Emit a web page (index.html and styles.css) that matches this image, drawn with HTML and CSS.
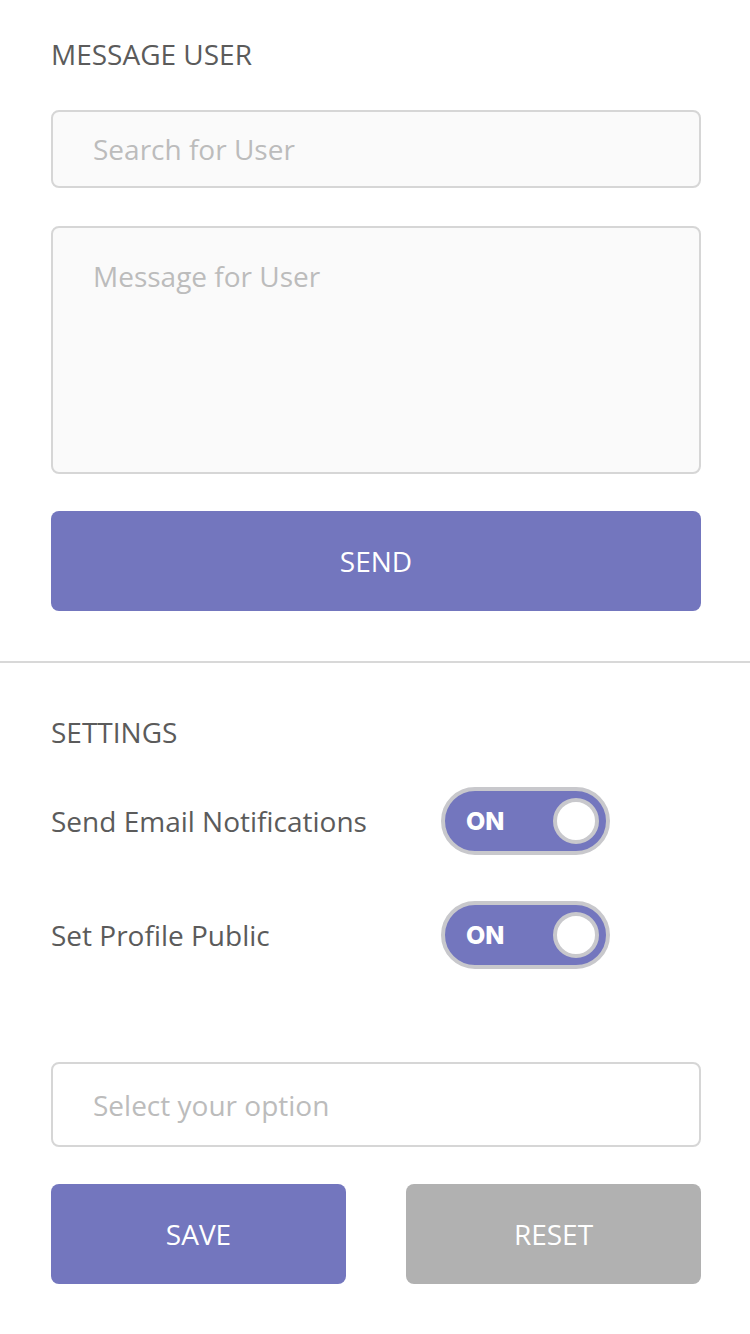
FILE: index.html
```html
<!DOCTYPE html>
<html lang="en">
<head>
<meta charset="utf-8">
<title>Message User</title>
<link rel="stylesheet" href="styles.css">
</head>
<body>
<main class="page">
  <section class="section section-message">
    <h2 class="section-title">MESSAGE USER</h2>
    <input class="field field-search" type="text" placeholder="Search for User">
    <textarea class="field field-message" placeholder="Message for User"></textarea>
    <button class="btn btn-primary btn-send" type="button">SEND</button>
  </section>
  <hr class="divider">
  <section class="section section-settings">
    <h2 class="section-title">SETTINGS</h2>
    <div class="setting-row row-first">
      <span class="setting-label">Send Email Notifications</span>
      <span class="toggle"><span class="toggle-text">ON</span><span class="toggle-knob"></span></span>
    </div>
    <div class="setting-row row-second">
      <span class="setting-label">Set Profile Public</span>
      <span class="toggle"><span class="toggle-text">ON</span><span class="toggle-knob"></span></span>
    </div>
    <select class="field field-select">
      <option value="" selected disabled>Select your option</option>
      <option>Option 1</option>
      <option>Option 2</option>
    </select>
    <div class="actions">
      <button class="btn btn-primary" type="button">SAVE</button>
      <button class="btn btn-secondary" type="button">RESET</button>
    </div>
  </section>
</main>
</body>
</html>
```
FILE: styles.css
```css
* { box-sizing: border-box; }

html, body {
  margin: 0;
  padding: 0;
  background: #ffffff;
}

body {
  font-family: "Open Sans", "Liberation Sans", sans-serif;
  font-size: 28px;
  line-height: 38px;
  color: #5b5b5b;
}

.page {
  width: 750px;
}

.section {
  display: flex;
  flex-direction: column;
  padding-left: 51px;
  padding-right: 49px;
}

.section-message {
  padding-top: 35px;
  padding-bottom: 50px;
}

.section-settings {
  padding-top: 50px;
}

.section-title {
  margin: 0;
  font-size: 28px;
  line-height: 38px;
  font-weight: 400;
  color: #5b5b5b;
}

.section-message .section-title { margin-bottom: 37px; }
.section-settings .section-title { margin-bottom: 36px; }

.field {
  display: block;
  width: 100%;
  margin: 0;
  font-family: "Open Sans", "Liberation Sans", sans-serif;
  font-size: 28px;
  line-height: 38px;
  color: #5b5b5b;
  background: #fafafa;
  border: 2px solid #d6d6d6;
  border-radius: 8px;
  outline: none;
}

.field::placeholder {
  color: #bcbcbc;
  opacity: 1;
}

.field-search {
  height: 78px;
  padding: 0 40px;
}

.field-message {
  height: 248px;
  margin-top: 38px;
  padding: 29px 40px;
  resize: none;
}

.field-select {
  height: 85px;
  margin-top: 93px;
  padding: 0 40px;
  background: #ffffff;
  color: #bcbcbc;
  -webkit-appearance: none;
  appearance: none;
}

.btn {
  display: block;
  height: 100px;
  border: none;
  border-radius: 8px;
  font-family: "Open Sans", "Liberation Sans", sans-serif;
  font-size: 28px;
  line-height: 38px;
  color: #ffffff;
  padding: 0;
  cursor: pointer;
}

.btn-primary { background: #7376be; }
.btn-secondary { background: #b1b1b1; }

.btn-send {
  width: 100%;
  margin-top: 37px;
}

.divider {
  margin: 0;
  height: 2px;
  border: none;
  background: #d8d8d8;
}

.setting-row {
  display: grid;
  grid-template-columns: 390px auto;
  align-items: center;
  justify-content: start;
}

.row-second { margin-top: 46px; }

.setting-label {
  color: #5b5b5b;
}

.toggle {
  display: flex;
  align-items: center;
  justify-content: space-between;
  width: 169px;
  height: 68px;
  padding: 0 7px 0 21px;
  background: #7376be;
  border: 4px solid #c8c8cc;
  border-radius: 34px;
}

.toggle-text {
  font-family: Inter, "Liberation Sans", sans-serif;
  font-weight: 800;
  font-size: 25px;
  line-height: 30px;
  color: #ffffff;
}

.toggle-knob {
  width: 46px;
  height: 46px;
  border-radius: 50%;
  background: #ffffff;
  border: 4px solid #c8c8cc;
}

.actions {
  display: grid;
  grid-template-columns: 1fr 1fr;
  column-gap: 60px;
  margin-top: 37px;
}
```
